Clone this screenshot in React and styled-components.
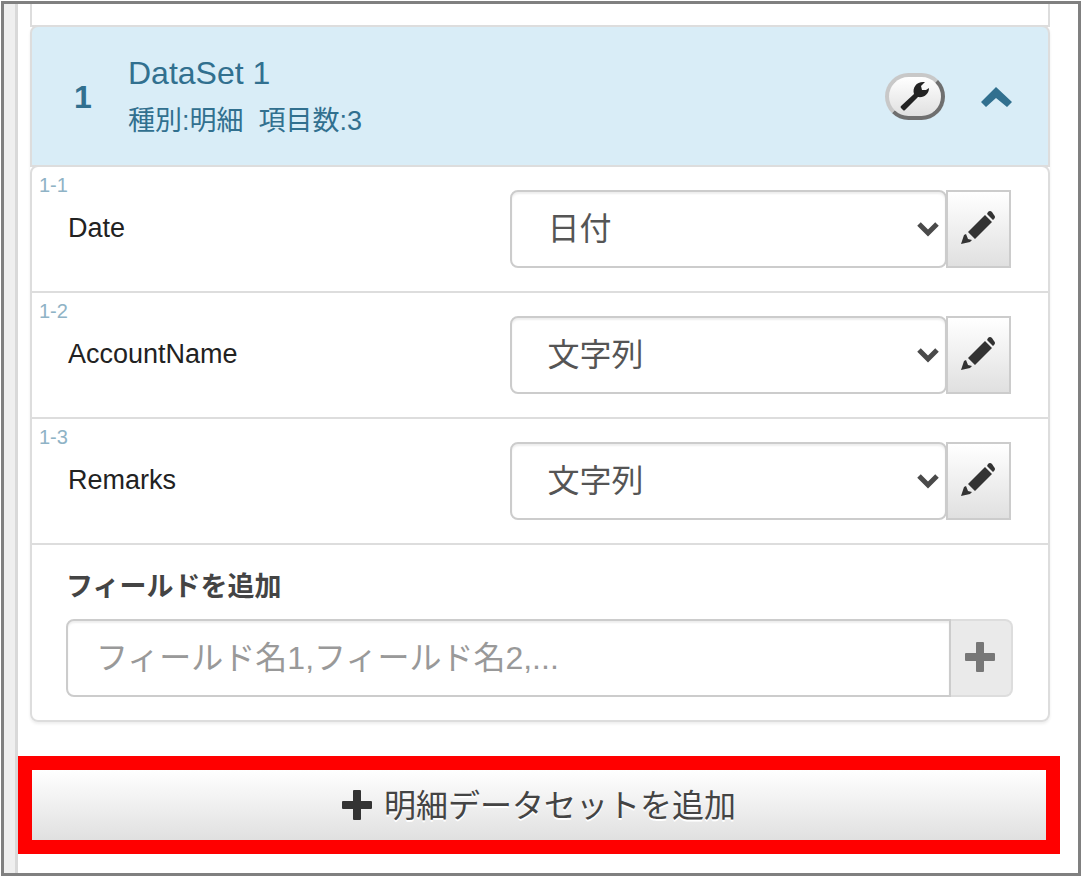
import React from "react";
import styled, { createGlobalStyle } from "styled-components";

const GlobalStyle = createGlobalStyle`
  *, *::before, *::after { box-sizing: border-box; }
  body {
    margin: 0;
    background: #fff;
    color: #222;
    font-family: "Liberation Sans", "Noto Sans CJK JP", sans-serif;
    font-size: 27px;
  }
  button, input, select { font: inherit; margin: 0; }
`;

const Frame = styled.div`
  display: flex;
  min-height: calc(100vh - 2px);
  margin: 1px;
  border: 3px solid #808080;
`;

const Gutter = styled.div`
  flex: 0 0 14px;
  background: #efefef;
  border-right: 3px solid #d9d9d9;
`;

const Content = styled.main`
  flex: 1;
  min-width: 0;
  padding-bottom: 19px;
`;

const PanelList = styled.div`
  margin: 0 28px 34px 12px;
`;

const PreviousPanel = styled.div`
  height: 23px;
  border: 2px solid #ddd;
  border-top: 0;
`;

const Panel = styled.section`
  margin-top: -2px;
  border-radius: 8px;
  box-shadow: 0 2px 3px rgba(0, 0, 0, 0.07);
`;

const PanelHeader = styled.header`
  display: flex;
  align-items: center;
  height: 142px;
  padding: 2px 36px 0 42px;
  background: #d9edf7;
  color: #31708f;
  border: 2px solid #ddd;
  border-radius: 8px 8px 0 0;
`;

const PanelBody = styled.div`
  margin-top: -2px;
  background: #fff;
  border: 2px solid #ddd;
  border-radius: 8px;
`;

const PanelNumber = styled.span`
  flex: 0 0 54px;
  font-size: 32px;
  font-weight: bold;
`;

const PanelTitles = styled.div`
  flex: 1;
`;

const PanelTitle = styled.h2`
  margin: 0;
  font-size: 32px;
  font-weight: normal;
  line-height: 48px;
`;

const PanelMeta = styled.p`
  margin: 0;
  line-height: 48px;
  white-space: pre;
`;

const ToolButton = styled.button`
  display: flex;
  align-items: center;
  justify-content: center;
  width: 60px;
  height: 47px;
  padding: 0;
  margin: 0 36px 2px 0;
  color: #222;
  background: linear-gradient(#fff, #e0e0e0);
  border: 4px solid;
  border-color: #c8c8c8 #6f6f6f #6f6f6f #c8c8c8;
  border-radius: 24px;
`;

const CollapseButton = styled.button`
  display: flex;
  padding: 0;
  color: #31708f;
  background: none;
  border: 0;
`;

const FieldRow = styled.div`
  display: grid;
  grid-template-columns: 478fr 502fr;
  height: 126px;
  padding-right: 37px;
  border-bottom: 2px solid #ddd;
`;

const FieldLabels = styled.div`
  padding: 6px 0 0 7px;
`;

const FieldIndex = styled.div`
  color: #8fb3c6;
  font-size: 20px;
  line-height: 24px;
`;

const FieldName = styled.label`
  display: block;
  margin: 11px 0 0 29px;
  line-height: 40px;
`;

const FieldControls = styled.div`
  display: flex;
  padding-top: 23px;
`;

const SelectBox = styled.div`
  position: relative;
  flex: 1;
  height: 78px;
  svg {
    position: absolute;
    right: 8px;
    top: 32px;
    pointer-events: none;
  }
`;

const TypeSelect = styled.select`
  appearance: none;
  width: 100%;
  height: 100%;
  padding: 0 36px;
  color: #555;
  font-size: 32px;
  background: #fff;
  border: 2px solid #ccc;
  border-radius: 8px;
  box-shadow: inset 0 2px 2px rgba(0, 0, 0, 0.07);
`;

const EditButton = styled.button`
  display: flex;
  align-items: center;
  justify-content: center;
  width: 65px;
  height: 78px;
  padding: 0 0 4px;
  margin-left: -1px;
  color: #333;
  background: linear-gradient(#fff, #e0e0e0);
  border: 2px solid #ccc;
`;

const AddField = styled.div`
  padding: 22px 35px 23px 34px;
`;

const AddLabel = styled.label`
  display: block;
  margin-bottom: 12px;
  color: #444;
  font-weight: bold;
  line-height: 40px;
`;

const InputGroup = styled.div`
  display: flex;
  height: 78px;
`;

const FieldInput = styled.input`
  flex: 1;
  min-width: 0;
  padding: 0 28px;
  color: #555;
  font-size: 32px;
  background: #fff;
  border: 2px solid #ccc;
  border-radius: 8px 0 0 8px;
  box-shadow: inset 0 2px 2px rgba(0, 0, 0, 0.07);
  &::placeholder { color: #999; opacity: 1; }
`;

const AddonButton = styled.button`
  display: flex;
  align-items: center;
  justify-content: center;
  width: 62px;
  padding: 0 2px 2px 0;
  color: #777;
  background: #eaeaea;
  border: 2px solid #ddd;
  border-left: 0;
  border-radius: 0 8px 8px 0;
`;

const Highlight = styled.div`
  margin-right: 18px;
  border: 14px solid #f00;
`;

const AddDatasetButton = styled.button`
  display: flex;
  align-items: center;
  justify-content: center;
  gap: 12px;
  width: 100%;
  height: 70px;
  padding: 0;
  color: #333;
  font-size: 32px;
  text-shadow: 0 2px 0 #fff;
  background: linear-gradient(#fff, #e0e0e0);
  border: 0;
`;

const ButtonText = styled.span`
  padding-bottom: 4px;
  color: #444;
`;

const PlusIcon = () => (
  <svg width="30" height="30" viewBox="0 0 30 30" aria-hidden="true">
    <path fill="currentColor" d="M11 1q0-1 1-1h6q1 0 1 1v10h10q1 0 1 1v6q0 1-1 1H19v10q0 1-1 1h-6q-1 0-1-1V19H1q-1 0-1-1v-6q0-1 1-1h10z" />
  </svg>
);

const WrenchIcon = () => (
  <svg width="30" height="30" viewBox="0 0 30 30" aria-hidden="true">
    <path fill="currentColor" d="M1 25L14 13C12 6 17 0 25 1L21 5L22 9L26 9L29 7C29 13 24 17 18 16L5 29Q4 30 3 29L1 27Q0 26 1 25z" />
  </svg>
);

const PencilIcon = () => (
  <svg width="34" height="33" viewBox="0 0 34 33" aria-hidden="true">
    <path fill="currentColor" d="M27 1Q29-1 31 1L33 4Q35 6 33 8L32 9L26 3zM24 4L31 11L14 28L7 21zM3 24L5 23L7 28L11 29L9 31L0 33z" />
  </svg>
);

const ChevronUp = () => (
  <svg width="31" height="20" viewBox="0 0 31 20" aria-hidden="true">
    <path fill="currentColor" d="M15 0L31 15L26 20L15 11L5 20L0 15z" />
  </svg>
);

const SelectArrow = () => (
  <svg width="22" height="15" viewBox="0 0 22 15" aria-hidden="true">
    <path fill="none" stroke="#4a4a4a" strokeWidth="5" d="M2 2L11 11L20 2" />
  </svg>
);

const TYPES = ["日付", "文字列"];

const FIELDS = [
  { index: "1-1", name: "Date", type: "日付" },
  { index: "1-2", name: "AccountName", type: "文字列" },
  { index: "1-3", name: "Remarks", type: "文字列" },
];

export default function App() {
  return (
    <>
      <GlobalStyle />
      <Frame>
        <Gutter />
        <Content>
          <PanelList>
            <PreviousPanel />
            <Panel>
              <PanelHeader>
                <PanelNumber>1</PanelNumber>
                <PanelTitles>
                  <PanelTitle>DataSet 1</PanelTitle>
                  <PanelMeta>{"種別:明細  項目数:3"}</PanelMeta>
                </PanelTitles>
                <ToolButton type="button" aria-label="設定">
                  <WrenchIcon />
                </ToolButton>
                <CollapseButton type="button" aria-label="閉じる">
                  <ChevronUp />
                </CollapseButton>
              </PanelHeader>
              <PanelBody>
                {FIELDS.map((field) => (
                  <FieldRow key={field.index}>
                    <FieldLabels>
                      <FieldIndex>{field.index}</FieldIndex>
                      <FieldName htmlFor={field.name}>{field.name}</FieldName>
                    </FieldLabels>
                    <FieldControls>
                      <SelectBox>
                        <TypeSelect id={field.name} defaultValue={field.type}>
                          {TYPES.map((type) => (
                            <option key={type}>{type}</option>
                          ))}
                        </TypeSelect>
                        <SelectArrow />
                      </SelectBox>
                      <EditButton type="button" aria-label="編集">
                        <PencilIcon />
                      </EditButton>
                    </FieldControls>
                  </FieldRow>
                ))}
                <AddField>
                  <AddLabel htmlFor="new-fields">フィールドを追加</AddLabel>
                  <InputGroup>
                    <FieldInput id="new-fields" type="text" placeholder="フィールド名1,フィールド名2,..." />
                    <AddonButton type="button" aria-label="追加">
                      <PlusIcon />
                    </AddonButton>
                  </InputGroup>
                </AddField>
              </PanelBody>
            </Panel>
          </PanelList>
          <Highlight>
            <AddDatasetButton type="button">
              <PlusIcon />
              <ButtonText>明細データセットを追加</ButtonText>
            </AddDatasetButton>
          </Highlight>
        </Content>
      </Frame>
    </>
  );
}
